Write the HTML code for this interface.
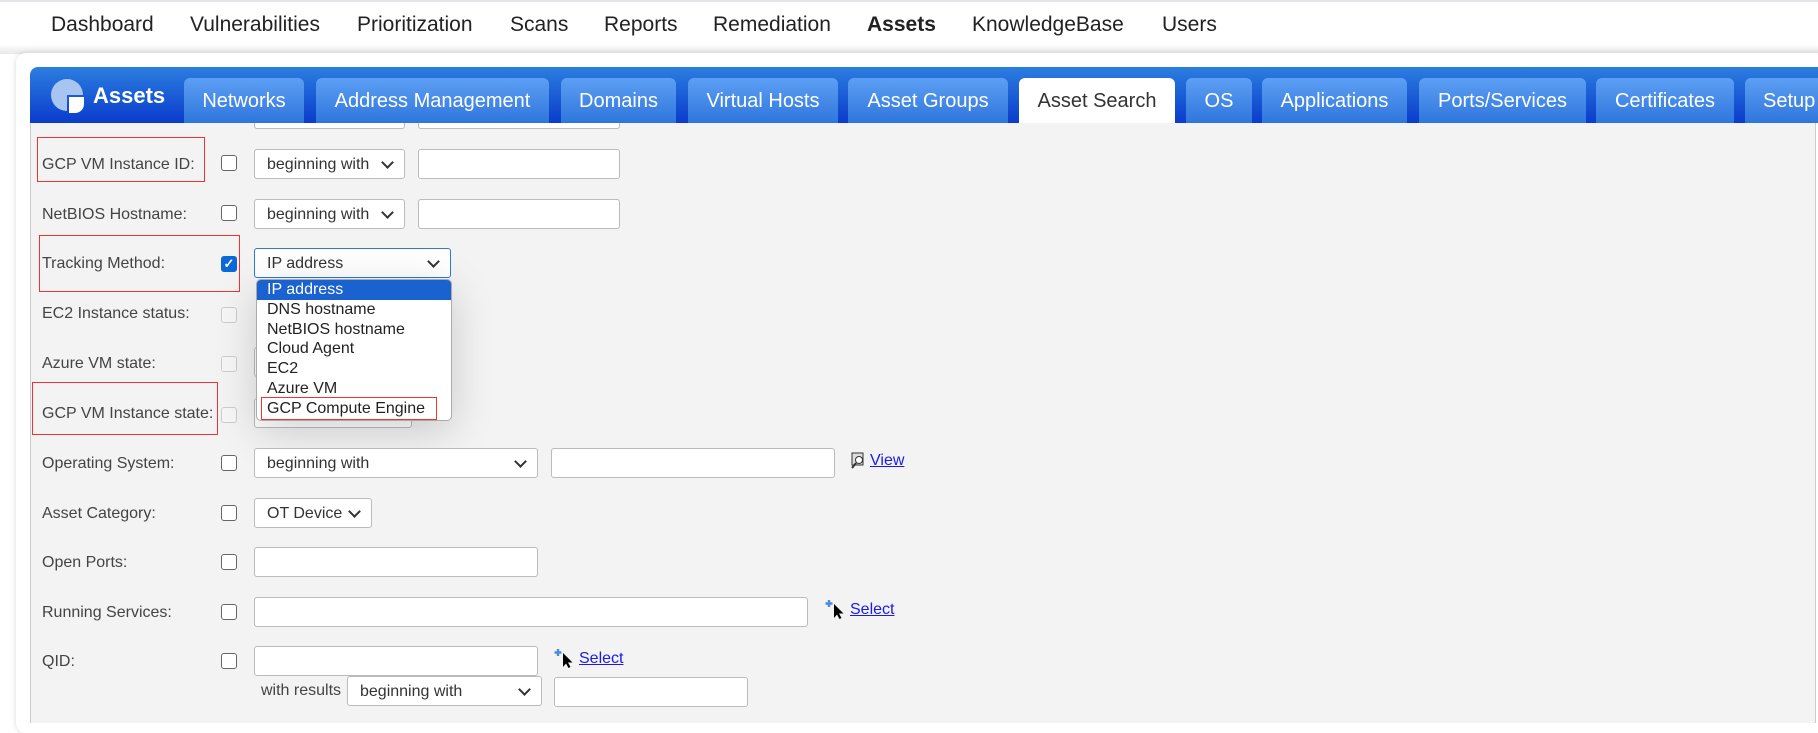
<!DOCTYPE html>
<html><head><meta charset="utf-8"><style>
*{box-sizing:border-box;margin:0;padding:0}
body{width:1818px;height:718px;overflow:hidden;background:#fff;font-family:"Liberation Sans",Arial,sans-serif;position:relative}
.a{position:absolute}
.nav{top:13px;font-size:21px;color:#222;white-space:nowrap}
.tab{position:absolute;top:78px;height:45px;border-radius:6px 6px 0 0;background:linear-gradient(#5d9ff4,#2f76dc);color:#fff;font-size:20px;text-align:center;line-height:47px;white-space:nowrap}
.lbl{position:absolute;left:42px;font-size:16px;color:#444;white-space:nowrap}
.cb{position:absolute;left:221px;width:16px;height:16px;border:1.5px solid #666;border-radius:3px;background:#fff}
.cb.dis{border-color:#ccc;background:#f6f6f6}
.sel,.inp{position:absolute;height:30px;background:#fff;border:1px solid #bbb;border-radius:3px;font-size:16px;color:#333;line-height:30px;padding-left:12px;white-space:nowrap}
.sel::after{content:"";position:absolute;right:12px;top:8px;width:7px;height:7px;border-right:2px solid #333;border-bottom:2px solid #333;transform:rotate(45deg)}
.red{position:absolute;border:1px solid #e33}
.lnk{position:absolute;font-size:16px;color:#1a1aee;text-decoration:underline}
.dd div{height:19.8px;line-height:20px;padding-left:10px;font-size:16px;color:#222}
</style></head><body>
<div class="a" style="left:0;top:0;width:1818px;height:2px;background:#e6e6ea"></div>
<div class="a" style="left:0;top:44px;width:1818px;height:10px;background:linear-gradient(#fff,#e8e8e8)"></div>
<div class="a nav" style="left:51px">Dashboard</div>
<div class="a nav" style="left:190px">Vulnerabilities</div>
<div class="a nav" style="left:357px">Prioritization</div>
<div class="a nav" style="left:510px">Scans</div>
<div class="a nav" style="left:604px">Reports</div>
<div class="a nav" style="left:713px">Remediation</div>
<div class="a nav" style="left:867px;font-weight:bold">Assets</div>
<div class="a nav" style="left:972px">KnowledgeBase</div>
<div class="a nav" style="left:1162px">Users</div>

<div class="a" style="left:16px;top:53px;width:1810px;height:680px;background:#fff;border-radius:10px;box-shadow:0 0 6px rgba(0,0,0,.15)"></div>
<div class="a" style="left:30px;top:123px;width:1786px;height:600px;background:#f3f3f3;border-left:1px solid #ccc;border-right:1px solid #ccc"></div>

<!-- partial top row -->
<div class="a" style="left:254px;top:123px;width:151px;height:6px;border:1px solid #bbb;border-top:none;border-radius:0 0 3px 3px;background:#fff"></div>
<div class="a" style="left:418px;top:123px;width:202px;height:6px;border:1px solid #bbb;border-top:none;border-radius:0 0 3px 3px;background:#fff"></div>

<div class="a" style="left:30px;top:67px;width:1790px;height:56px;border-radius:8px 0 0 0;background:linear-gradient(#2c7ee0,#0a3ccc)"></div>
<svg class="a" style="left:50px;top:78px" width="36" height="36" viewBox="0 0 36 36"><path d="M17 1A16 16 0 1 0 17 33L17 17Z" fill="#a8c4f0"/><path d="M17 1A16 16 0 0 1 33 17L17 17Z" fill="#a8c4f0"/><path d="M19 19H34V26A9 9 0 0 1 25 35H19Z" fill="#fff"/></svg>
<div class="a" style="left:93px;top:83px;font-size:22px;font-weight:bold;color:#fff">Assets</div>

<div class="tab" style="left:184px;width:120px">Networks</div>
<div class="tab" style="left:316px;width:233px">Address Management</div>
<div class="tab" style="left:561px;width:115px">Domains</div>
<div class="tab" style="left:688px;width:150px">Virtual Hosts</div>
<div class="tab" style="left:848px;width:160px">Asset Groups</div>
<div class="tab" style="left:1019px;width:156px;background:#fff;color:#333">Asset Search</div>
<div class="tab" style="left:1186px;width:66px">OS</div>
<div class="tab" style="left:1262px;width:145px">Applications</div>
<div class="tab" style="left:1419px;width:167px">Ports/Services</div>
<div class="tab" style="left:1596px;width:138px">Certificates</div>
<div class="tab" style="left:1745px;width:80px;text-align:left;padding-left:18px">Setup</div>

<div class="lbl" style="top:156px">GCP VM Instance ID:</div>
<div class="red" style="left:37px;top:137px;width:168px;height:45px"></div>
<div class="cb" style="top:155px"></div>
<div class="sel" style="left:254px;top:149px;width:151px">beginning with</div>
<div class="inp" style="left:418px;top:149px;width:202px"></div>

<div class="lbl" style="top:206px">NetBIOS Hostname:</div>
<div class="cb" style="top:205px"></div>
<div class="sel" style="left:254px;top:199px;width:151px">beginning with</div>
<div class="inp" style="left:418px;top:199px;width:202px"></div>

<div class="lbl" style="top:255px">Tracking Method:</div>
<div class="red" style="left:39px;top:235px;width:201px;height:57px"></div>
<div class="a" style="left:221px;top:256px;width:16px;height:16px;border-radius:3px;background:#0b68d9;color:#fff;font-size:13px;line-height:16px;text-align:center;font-weight:bold">✓</div>
<div class="sel" style="left:254px;top:248px;width:197px;border-color:#2a7ad8">IP address</div>

<div class="lbl" style="top:305px">EC2 Instance status:</div>
<div class="cb dis" style="top:307px"></div>
<div class="lbl" style="top:355px">Azure VM state:</div>
<div class="cb dis" style="top:356px"></div>
<div class="sel" style="left:254px;top:347px;width:160px"></div>
<div class="lbl" style="top:405px">GCP VM Instance state:</div>
<div class="red" style="left:32px;top:382px;width:186px;height:53px"></div>
<div class="cb dis" style="top:407px"></div>
<div class="sel" style="left:254px;top:398px;width:158px"></div>

<div class="a" style="left:258px;top:280px;width:193px;height:140px;box-shadow:0 10px 40px rgba(0,0,0,.18)"></div>
<div class="a dd" style="left:256px;top:279px;width:196px;height:142px;background:#fff;border:1px solid #aaa;border-radius:5px;overflow:hidden">
<div style="background:#1a62d0;color:#fff">IP address</div>
<div>DNS hostname</div><div>NetBIOS hostname</div><div>Cloud Agent</div><div>EC2</div><div>Azure VM</div><div>GCP Compute Engine</div>
</div>
<div class="red" style="left:261px;top:397px;width:176px;height:23px"></div>

<div class="lbl" style="top:455px">Operating System:</div>
<div class="cb" style="top:455px"></div>
<div class="sel" style="left:254px;top:448px;width:284px">beginning with</div>
<div class="inp" style="left:551px;top:448px;width:284px"></div>
<svg class="a" style="left:851px;top:452px" width="14" height="17" viewBox="0 0 14 17"><rect x="1" y="1" width="11" height="12" fill="#ddd" stroke="#333"/><circle cx="8" cy="8" r="3.5" fill="#fff" stroke="#333"/><path d="M5 11L1 16" stroke="#333" stroke-width="2"/></svg>
<div class="lnk" style="left:870px;top:452px">View</div>

<div class="lbl" style="top:505px">Asset Category:</div>
<div class="cb" style="top:505px"></div>
<div class="sel" style="left:254px;top:498px;width:118px">OT Device</div>

<div class="lbl" style="top:554px">Open Ports:</div>
<div class="cb" style="top:554px"></div>
<div class="inp" style="left:254px;top:547px;width:284px"></div>

<div class="lbl" style="top:604px">Running Services:</div>
<div class="cb" style="top:604px"></div>
<div class="inp" style="left:254px;top:597px;width:554px"></div>
<svg class="a" style="left:825px;top:599px" width="22" height="20" viewBox="0 0 22 20"><path d="M4 1V8M0.5 4.5H7.5" stroke="#4a8ae0" stroke-width="2.4"/><path d="M9 5V19L12 15.5L14.5 20L16.5 19L14 14.5H18.5Z" fill="#000"/></svg>
<div class="lnk" style="left:850px;top:601px">Select</div>

<div class="lbl" style="top:653px">QID:</div>
<div class="cb" style="top:653px"></div>
<div class="inp" style="left:254px;top:646px;width:284px"></div>
<svg class="a" style="left:554px;top:648px" width="22" height="20" viewBox="0 0 22 20"><path d="M4 1V8M0.5 4.5H7.5" stroke="#4a8ae0" stroke-width="2.4"/><path d="M9 5V19L12 15.5L14.5 20L16.5 19L14 14.5H18.5Z" fill="#000"/></svg>
<div class="lnk" style="left:579px;top:650px">Select</div>
<div class="a" style="left:261px;top:682px;font-size:16px;color:#444">with results</div>
<div class="sel" style="left:347px;top:676px;width:195px">beginning with</div>
<div class="inp" style="left:554px;top:677px;width:194px"></div>
</body></html>
